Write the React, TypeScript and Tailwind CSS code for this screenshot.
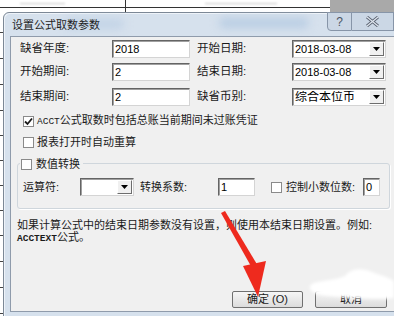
import React from "react";

const FONT = "[font-family:'Liberation_Sans','Noto_Sans_CJK_SC',sans-serif]";

function Sunken({ w, children, className = "" }: { w: string; children?: React.ReactNode; className?: string }) {
  return (
    <div
      className={`${w} shrink-0 h-[18px] bg-white border border-t-[#646464] border-l-[#646464] border-r-[#d4d4d4] border-b-[#d4d4d4] shadow-[inset_1px_1px_0_#a0a0a0] flex items-center pl-[2px] text-[11px] text-black leading-none ${className}`}
    >
      {children}
    </div>
  );
}

function Combo({ w, children }: { w: string; children?: React.ReactNode }) {
  return (
    <div
      className={`${w} shrink-0 h-[18px] bg-white border border-t-[#646464] border-l-[#646464] border-r-[#d4d4d4] border-b-[#d4d4d4] shadow-[inset_1px_1px_0_#a0a0a0] flex items-center text-[11px] text-black leading-none`}
    >
      <div className="flex-1 pl-[2px] truncate">{children}</div>
      <div className="w-[15px] h-[14px] mr-[1px] bg-[#f0f0f0] border border-t-[#ffffff] border-l-[#ffffff] border-r-[#6d6d6d] border-b-[#6d6d6d] flex items-center justify-center">
        <svg width="7" height="4" viewBox="0 0 7 4">
          <path d="M0 0H7L3.5 4Z" fill="#000" />
        </svg>
      </div>
    </div>
  );
}

function Check({ checked = false }: { checked?: boolean }) {
  return (
    <div className="w-[11px] h-[11px] bg-white border border-[#8a8a8a] flex items-center justify-center shrink-0">
      {checked && (
        <svg width="9" height="9" viewBox="0 0 9 9">
          <path d="M1 4.5L3.5 7L8 1.5" stroke="#1a1a1a" strokeWidth="1.8" fill="none" />
        </svg>
      )}
    </div>
  );
}

export default function App() {
  const leftLines = [32, 58, 84, 110, 135, 160, 185, 210, 235, 261, 287, 313];
  return (
    <div className={`relative w-[394px] h-[316px] overflow-hidden bg-white ${FONT}`}>
      {/* background spreadsheet */}
      <div className="absolute left-0 top-[7px] w-[330px] h-px bg-[#333]" />
      <div className="absolute left-[125px] top-0 w-px h-[12px] bg-[#333]" />
      <div className="absolute left-[330px] top-0 w-[64px] h-[12px] bg-[#a9a9a9]" />
      <div className="absolute left-[20px] top-0 text-[9px] text-[#c8c8c8] blur-[1px] leading-none">━━━━━</div>
      <div className="absolute left-[205px] top-0 text-[9px] text-[#c8c8c8] blur-[1px] leading-none">━━━━━━━━</div>
      {leftLines.map((y) => (
        <div key={y} className="absolute left-0 w-[4px] h-px bg-[#444]" style={{ top: y }} />
      ))}

      {/* dialog window */}
      <div className="absolute left-[3px] top-[12px] w-[400px] h-[310px] rounded-t-[6px] border border-[#7c8896] bg-[#d6e1ed] shadow-[inset_1px_1px_0_#eef3f9] flex flex-col">
        {/* glass smudges */}
        <div className="absolute left-[60px] top-[6px] w-[60px] h-[10px] bg-[#c2d3e6] blur-[4px] rounded-full" />
        <div className="absolute left-[215px] top-[5px] w-[90px] h-[10px] bg-[#b9cde3] blur-[4px] rounded-full" />
        {/* title bar */}
        <div className="relative h-[23px] flex items-center">
          <div className="pl-[8px] pt-[1px] text-[11px] text-[#1e1e1e] leading-none">设置公式取数参数</div>
          <div className="absolute left-[323px] top-[-1px] flex">
            <div className="w-[25px] h-[19px] bg-[#cbd7e5] border border-[#8795a8] rounded-bl-[4px] flex items-center justify-center text-[12px] text-[#4b5563] leading-none">
              ?
            </div>
            <div className="w-[42px] h-[19px] bg-[#cbd7e5] border border-l-0 border-[#8795a8] flex items-center justify-center">
              <svg width="13" height="11" viewBox="0 0 13 11">
                <path d="M1 1L12 10M12 1L1 10" stroke="#5a6270" strokeWidth="3" />
                <path d="M1 1L12 10M12 1L1 10" stroke="#dfe6ef" strokeWidth="1.2" />
              </svg>
            </div>
          </div>
        </div>

        {/* client area */}
        <div className="ml-[6px] h-[276px] bg-[#f0f0f0] border border-[#8f9bab] flex flex-col text-[11px] text-[#1a1a1a]">
          {/* row 1 */}
          <div className="mt-[3px] pl-[9px] flex items-center">
            <div className="w-[92px] shrink-0 text-[11.5px]">缺省年度:</div>
            <Sunken w="w-[78px]">2018</Sunken>
            <div className="ml-[7px] w-[95px] shrink-0 text-[11.5px]">开始日期:</div>
            <Combo w="w-[94px]">2018-03-08</Combo>
          </div>
          {/* row 2 */}
          <div className="mt-[5px] pl-[9px] flex items-center">
            <div className="w-[92px] shrink-0 text-[11.5px]">开始期间:</div>
            <Sunken w="w-[78px]">2</Sunken>
            <div className="ml-[7px] w-[95px] shrink-0 text-[11.5px]">结束日期:</div>
            <Combo w="w-[94px]">2018-03-08</Combo>
          </div>
          {/* row 3 */}
          <div className="mt-[7px] pl-[9px] flex items-center">
            <div className="w-[92px] shrink-0 text-[11.5px]">结束期间:</div>
            <Sunken w="w-[78px]">2</Sunken>
            <div className="ml-[7px] w-[95px] shrink-0 text-[11.5px]">缺省币别:</div>
            <Combo w="w-[94px]">
              <span className="text-[12px]">综合本位币</span>
            </Combo>
          </div>

          {/* checkbox 1 */}
          <div className="mt-[8px] h-[14px] flex items-center pl-[12px]">
            <Check checked />
            <span className="ml-[3px] leading-none">
              <span className="[font-family:'Liberation_Mono',monospace] text-[9.5px]">ACCT</span>公式取数时包括总账当前期间未过账凭证
            </span>
          </div>
          {/* checkbox 2 */}
          <div className="mt-[7px] h-[14px] flex items-center pl-[12px]">
            <Check />
            <span className="ml-[3px] leading-none">报表打开时自动重算</span>
          </div>

          {/* group box */}
          <div className="relative mt-[14px] ml-[6px] w-[373px] h-[46px] border border-[#cfd6dc] rounded-[3px] shadow-[1px_1px_0_#fff]">
            <div className="absolute left-[2px] top-[-7px] h-[14px] flex items-center bg-[#f0f0f0] pr-[3px] pl-[1px]">
              <Check />
              <span className="ml-[4px] leading-none">数值转换</span>
            </div>
            <div className="mt-[14px] pl-[5px] flex items-center">
              <div className="w-[57px] shrink-0">运算符:</div>
              <Combo w="w-[54px]"></Combo>
              <div className="ml-[6px] w-[78px] shrink-0">转换系数:</div>
              <Sunken w="w-[37px]">1</Sunken>
              <div className="ml-[16px]">
                <Check />
              </div>
              <div className="ml-[4px] w-[77px] shrink-0">控制小数位数:</div>
              <Sunken w="w-[17px]">0</Sunken>
            </div>
          </div>

          {/* info text */}
          <div className="mt-[10px] pl-[6px] leading-[12px]">
            <div>如果计算公式中的结束日期参数没有设置，则使用本结束日期设置。例如:</div>
            <div>
              <span className="[font-family:'Liberation_Mono',monospace] text-[9.5px] font-bold">ACCTEXT</span>公式。
            </div>
          </div>

          {/* buttons */}
          <div className="flex-1" />
          <div className="mb-[3px] pl-[221px] flex items-center">
            <div className="w-[71px] shrink-0 h-[17px] border border-[#707070] rounded-[2px] bg-gradient-to-b from-[#f6f6f6] to-[#dcdcdc] flex items-center justify-center leading-none">
              确定 <span className="ml-[3px]">(O)</span>
            </div>
            <div className="ml-[12px] w-[72px] shrink-0 h-[17px] border border-[#707070] rounded-[2px] bg-gradient-to-b from-[#f6f6f6] to-[#dcdcdc] flex items-center justify-center leading-none">
              取消
            </div>
          </div>
        </div>
      </div>

      {/* white smear overlay */}
      <svg className="absolute left-0 top-0 pointer-events-none" width="394" height="316" viewBox="0 0 394 316">
        <defs>
          <filter id="bl" x="-20%" y="-50%" width="140%" height="200%">
            <feGaussianBlur stdDeviation="1.5" />
          </filter>
        </defs>
        <path
          d="M345 276 C352 268 362 268 372 272 C382 276 392 278 394 282 L394 298 C380 300 350 298 330 296 C318 295 308 292 310 286 C314 280 330 282 345 276 Z"
          fill="#ffffff"
          filter="url(#bl)"
        />
        {/* red arrow */}
        <path d="M221 213 L225 211 L258 266 L252 268 Z" fill="#ee2a1e" />
        <path d="M243 266 L266 261 L258 297 Z" fill="#ee2a1e" />
      </svg>
    </div>
  );
}
